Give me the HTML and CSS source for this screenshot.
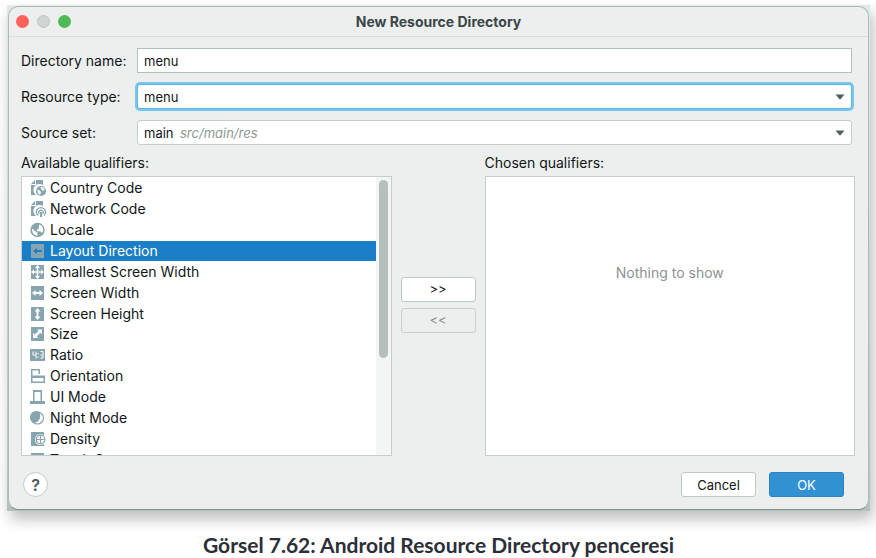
FILE: index.html
```html
<!DOCTYPE html>
<html lang="en">
<head>
<meta charset="utf-8">
<title>New Resource Directory</title>
<link rel="stylesheet" href="styles.css">
</head>
<body>
<figure class="figure">
  <div class="backdrop">
    <form class="dialog" aria-labelledby="dialog-title">
      <header class="titlebar">
        <div class="lights">
          <button type="button" class="light light-close" aria-label="Close"></button>
          <button type="button" class="light light-min" aria-label="Minimize" disabled></button>
          <button type="button" class="light light-zoom" aria-label="Zoom"></button>
        </div>
        <h1 class="title" id="dialog-title">New Resource Directory</h1>
      </header>

      <div class="fields">
        <label for="dir-name">Directory name:</label>
        <input class="control" id="dir-name" type="text" value="menu">

        <label for="res-type">Resource type:</label>
        <div class="combo combo-focus">
          <select class="control" id="res-type"><option>menu</option></select>
          <svg class="arrow" viewBox="0 0 10 6" aria-hidden="true"><path d="M0.500 0.500h9L5 5.800z"/></svg>
        </div>

        <label for="source-set">Source set:</label>
        <div class="combo">
          <select class="control" id="source-set"><option>main</option></select>
          <span class="hint">src/main/res</span>
          <svg class="arrow" viewBox="0 0 10 6" aria-hidden="true"><path d="M0.500 0.500h9L5 5.800z"/></svg>
        </div>
      </div>

      <div class="qualifiers">
        <section class="column">
          <h2 class="column-title" id="available">Available qualifiers:</h2>
          <div class="panel list-panel">
            <ul class="list" role="listbox" aria-labelledby="available" tabindex="0">
              <li class="row" role="option">
                <svg class="icon" viewBox="0 0 16 16"><path class="f" d="M6 0h7v5a6 6 0 0 0-7 10H1V5h5z"/><path class="f" d="M5 0v4H1z"/><circle class="f" cx="11" cy="11" r="5"/><path class="w" d="M7.200 9.500l3 1.200.8 1.800-1 2.500-1.800-1.500zM10.500 7l3 .5 1.200 2-1.700 1.500-1.500-1.500z"/></svg>
                Country Code</li>
              <li class="row" role="option">
                <svg class="icon" viewBox="0 0 16 16"><path class="f" d="M6 0h7v5a6 6 0 0 0-7 10H1V5h5z"/><path class="f" d="M5 0v4H1z"/><path class="s" d="M8 14.500a4.500 4.500 0 1 1 6 0M9.300 12.800a2.200 2.200 0 1 1 3.400 0"/><path class="f" d="M10 11h2v5h-2z"/></svg>
                Network Code</li>
              <li class="row" role="option">
                <svg class="icon" viewBox="0 0 16 16"><circle class="f" cx="7.500" cy="8" r="7.200"/><path class="w" d="M2 6.500l4 3.200 1.500 1v3C4 13.500 1.600 10.500 2 6.500zM9 2.500c3 .5 4.500 3 4.300 6L11.800 11l-1.500-1.800H7V7.500h1.500V5.800L9 5z"/></svg>
                Locale</li>
              <li class="row row-selected" role="option" aria-selected="true">
                <svg class="icon" viewBox="0 0 16 16"><path class="f" d="M1 1h13v14H1z"/><path class="b" d="M3 8l4-3v2h5v2H7v2z"/></svg>
                Layout Direction</li>
              <li class="row" role="option">
                <svg class="icon" viewBox="0 0 16 16"><path class="f" d="M1 1h13v14H1z"/><path class="w" d="M7.500 1L10 4H8.300v3.200H11V5.500L14 8l-3 2.500V8.800H8.300V12H10l-2.500 3L5 12h1.700V8.800H4v1.700L1 8l3-2.500v1.700h2.700V4H5z"/></svg>
                Smallest Screen Width</li>
              <li class="row" role="option">
                <svg class="icon" viewBox="0 0 16 16"><path class="f" d="M1 1h13v14H1z"/><path class="w" d="M2 8l3.500-3v2h4V5L13 8l-3.500 3V9h-4v2z"/></svg>
                Screen Width</li>
              <li class="row" role="option">
                <svg class="icon" viewBox="0 0 16 16"><path class="f" d="M1 1h13v14H1z"/><path class="w" d="M7.500 2l3 3.500h-2v5h2l-3 3.500-3-3.500h2v-5h-2z"/></svg>
                Screen Height</li>
              <li class="row" role="option">
                <svg class="icon" viewBox="0 0 16 16"><path class="f" d="M1 1h13v14H1z"/><path class="w" d="M7 3.500h5v5l-1.700-1.700-3.600 3.600L8.400 12H3V6.700l1.700 1.700 3.900-3.400z"/></svg>
                Size</li>
              <li class="row" role="option">
                <svg class="icon" viewBox="0 0 16 16"><path class="f" d="M0 2h15v12H0z"/><path class="l" d="M3 4.500v3.500h3M6 4.500v7M10.500 4.500H13v6.500h-2.500M10.500 8H13"/><path class="w" d="M7.500 6h1.200v1.200H7.500zM7.500 9.500h1.200v1.200H7.500z"/></svg>
                Ratio</li>
              <li class="row" role="option">
                <svg class="icon" viewBox="0 0 16 16"><path class="f" d="M1 1h9v5H8.500V2.500h-6V8H1z"/><path class="f" fill-rule="evenodd" d="M1 7.500h14V15H1zM2.500 10v3.500h11V10z"/></svg>
                Orientation</li>
              <li class="row" role="option">
                <svg class="icon" viewBox="0 0 16 16"><path class="f" fill-rule="evenodd" d="M3 1h9v11h3v3H0v-3h3zM4.500 3v9h6V3z"/></svg>
                UI Mode</li>
              <li class="row" role="option">
                <svg class="icon" viewBox="0 0 16 16"><circle class="s" cx="7.500" cy="8" r="6"/><path class="f" d="M9.500 2A6.300 6.300 0 1 0 3 12.800C8 13.500 11.800 8.500 9.500 2z"/></svg>
                Night Mode</li>
              <li class="row" role="option">
                <svg class="icon" viewBox="0 0 16 16"><path class="f" d="M1 1h13v14H1z"/><circle class="w" cx="10.500" cy="8.500" r="5.500"/><circle class="s" cx="10.500" cy="8.500" r="4.300"/><path class="s" d="M10.500 4.500v8M6.500 8.500h8"/></svg>
                Density</li>
              <li class="row" role="option">
                <svg class="icon" viewBox="0 0 16 16"><path class="f" d="M1 1h13v14H1z"/><path class="w" d="M6 3h3v6H6z"/></svg>
                Touch Screen</li>
            </ul>
            <div class="scrollbar"><div class="thumb"></div></div>
          </div>
        </section>

        <div class="transfer">
          <button type="button" class="button" aria-label="Add qualifier">&gt;&gt;</button>
          <button type="button" class="button" aria-label="Remove qualifier" disabled>&lt;&lt;</button>
        </div>

        <section class="column">
          <h2 class="column-title">Chosen qualifiers:</h2>
          <div class="panel empty-panel"><p class="empty">Nothing to show</p></div>
        </section>
      </div>

      <footer class="footer">
        <button type="button" class="help" aria-label="Help">?</button>
        <div class="actions">
          <button type="button" class="button">Cancel</button>
          <button type="submit" class="button button-primary">OK</button>
        </div>
      </footer>
    </form>
  </div>
  <figcaption class="caption">Görsel 7.62: Android Resource Directory penceresi</figcaption>
</figure>
</body>
</html>
```

FILE: styles.css
```css
* {
  box-sizing: border-box;
}

body {
  margin: 0;
  background: #fff;
  color: #101617;
  font: 14px/16px Inter, "Liberation Sans", sans-serif;
  overflow: hidden;
}

button,
input,
select {
  color: inherit;
  font: inherit;
  font-size: 13px;
}

.figure {
  margin: 0;
  padding: 5px 6px 0 7px;
}

.backdrop {
  padding: 1px;
  background: linear-gradient(#e2e9e6, #b5c1be);
  box-shadow: 3px 8px 14px rgba(0, 0, 0, 0.26);
}

.dialog {
  border: 1px solid #adbab7;
  border-bottom-color: #84928f;
  border-radius: 10px;
  background: #edefee;
}

/* Title bar */

.titlebar {
  display: grid;
  grid-template-columns: 1fr auto 1fr;
  align-items: center;
  height: 30px;
  padding: 0 7px;
  border-bottom: 1px solid #d3dfdb;
}

.lights {
  display: flex;
  gap: 8px;
}

.light {
  width: 13px;
  height: 13px;
  padding: 0;
  border: 0;
  border-radius: 50%;
}

.light-close {
  background: #ff605a;
}

.light-min {
  border: 1px solid #bdc6c4;
  background: #d0d5d4;
}

.light-zoom {
  background: #4fbb58;
}

.title {
  margin: 0;
  color: #3a4647;
  font-size: 14px;
  font-weight: 700;
}

/* Form fields */

.fields {
  display: grid;
  grid-template-columns: 116px 1fr;
  row-gap: 11px;
  align-items: center;
  padding: 11px 16px 0 12px;
}

.control {
  display: block;
  width: 100%;
  height: 25px;
  padding: 0 6px;
  border: 1px solid #b3bfbb;
  border-radius: 0;
  outline: 0;
  background: #fff;
  appearance: none;
}

.combo {
  position: relative;
}

.combo .control {
  border-color: #c3cdca;
  border-radius: 3px;
}

.combo-focus .control {
  border-color: #64b3e0;
  box-shadow: 0 0 0 2px #78c5ee;
}

.arrow {
  position: absolute;
  top: 10px;
  right: 7px;
  width: 10px;
  height: 6px;
  fill: #505f60;
  pointer-events: none;
}

.hint {
  position: absolute;
  top: 5px;
  left: 43px;
  color: #8d9795;
  font-size: 13px;
  font-style: italic;
  pointer-events: none;
}

/* Qualifier lists */

.qualifiers {
  display: grid;
  grid-template-columns: 1fr auto 1fr;
  column-gap: 9px;
  padding: 10px 13px 0 12px;
}

.column-title {
  margin: 0 0 5px;
  font-size: 14px;
  font-weight: 400;
}

.panel {
  height: 280px;
  border: 1px solid #c5cecb;
  background: #fff;
}

.list-panel {
  display: flex;
  overflow: hidden;
}

.list {
  display: grid;
  flex: 1;
  grid-template-rows: repeat(14, 1fr);
  height: 293px;
  margin: 0;
  padding: 1px 0 0;
  outline: 0;
  list-style: none;
}

.row {
  display: flex;
  align-items: center;
  gap: 4px;
  padding-left: 8px;
}

.row-selected {
  background: #1a7fc6;
  color: #fff;
}

.icon {
  width: 16px;
  height: 16px;
}

.f {
  fill: #86a5ae;
}

.w {
  fill: #fff;
}

.b {
  fill: #1a7fc6;
}

.s {
  fill: none;
  stroke: #86a5ae;
  stroke-width: 1.2;
}

.l {
  fill: none;
  stroke: #fff;
}

.scrollbar {
  width: 15px;
  padding: 3px;
  background: #f4f5f5;
}

.thumb {
  width: 9px;
  height: 178px;
  border-radius: 5px;
  background: #b5c0be;
}

.transfer {
  display: flex;
  flex-direction: column;
  justify-content: center;
  gap: 6px;
  padding-bottom: 2px;
}

.empty-panel {
  padding-top: 88px;
  text-align: center;
}

.empty {
  margin: 0;
  color: #8d9292;
}

/* Buttons */

.button {
  width: 75px;
  height: 25px;
  padding: 0;
  border: 1px solid #bdc9c6;
  border-radius: 3px;
  background: #fff;
}

.button:disabled {
  border-color: #c7d1ce;
  background: #edefee;
  color: #848e8d;
}

.button-primary {
  border-color: #2a83c2;
  background: #3291d1;
  color: #fff;
}

.footer {
  display: flex;
  align-items: center;
  justify-content: space-between;
  padding: 16px 24px 12px 14px;
}

.actions {
  display: flex;
  gap: 13px;
}

.help {
  width: 25px;
  height: 25px;
  padding: 0;
  border: 1px solid #c0cac7;
  border-radius: 50%;
  background: #fff;
  color: #4b5859;
  font-size: 16px;
  font-weight: 600;
}

.caption {
  margin-top: 22px;
  color: #2c2e38;
  font: 700 21px/24px Lato, "Noto Sans", sans-serif;
  text-align: center;
}
```
